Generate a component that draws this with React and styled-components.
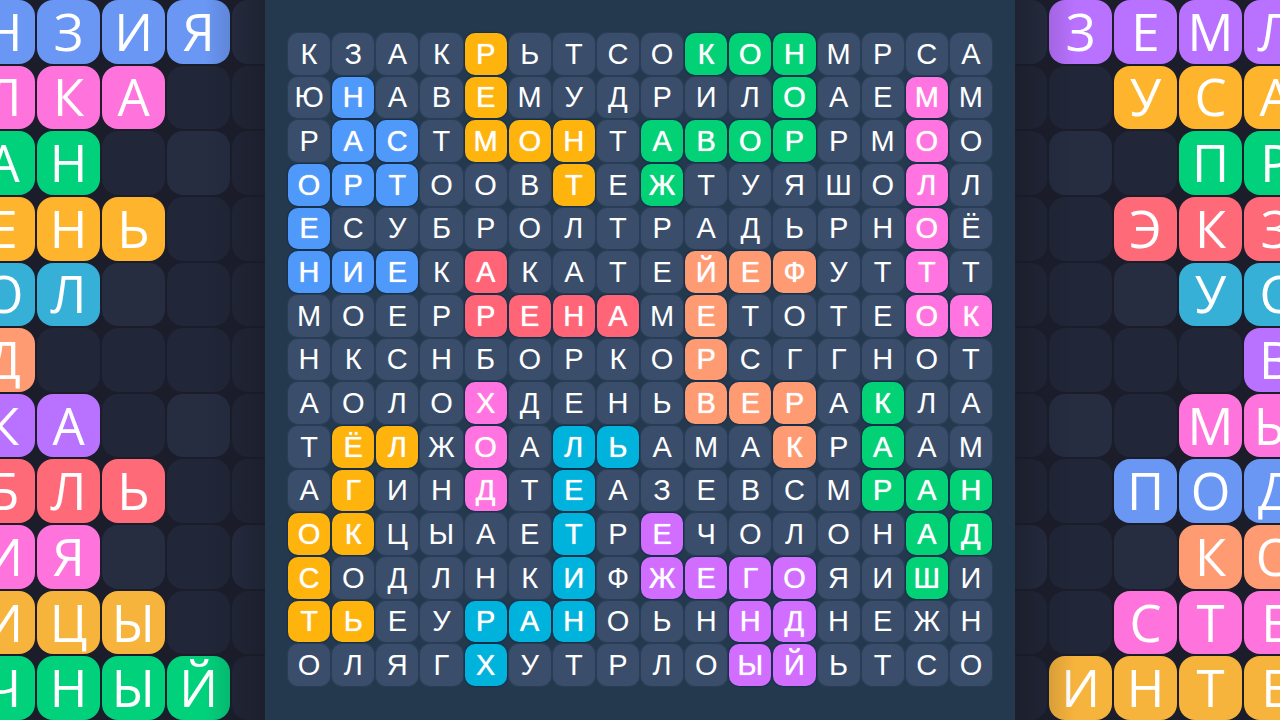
import React from "react";
import styled, { createGlobalStyle } from "styled-components";

const GlobalStyle = createGlobalStyle`
  * { box-sizing: border-box; }
  body { margin: 0; background: #1b1d2b; overflow-x: hidden; }
`;

const boardColors = {
  b: "#4f99fb",
  y: "#ffb30d",
  g: "#02d176",
  p: "#ff74e0",
  r: "#ff6577",
  o: "#ff9b72",
  c: "#00b3dc",
  v: "#d16dff",
  ".": "#3a4e6b",
};

const boardRows = [
  ["КЗАКРЬТСОКОНМРСА", "....y....ggg...."],
  ["ЮНАВЕМУДРИЛОАЕММ", ".b..y......g..p."],
  ["РАСТМОНТАВОРРМОО", ".bb.yyy.gggg..p."],
  ["ОРТООВТЕЖТУЯШОЛЛ", "bbb...y.g.....p."],
  ["ЕСУБРОЛТРАДЬРНОЁ", "b.............p."],
  ["НИЕКАКАТЕЙЕФУТТТ", "bbb.r....ooo..p."],
  ["МОЕРРЕНАМЕТОТЕОК", "....rrrr.o....pp"],
  ["НКСНБОРКОРСГГНОТ", ".........o......"],
  ["АОЛОХДЕНЬВЕРАКЛА", "....p....ooo.g.."],
  ["ТЁЛЖОАЛЬАМАКРААМ", ".yy.p.cc...o.g.."],
  ["АГИНДТЕАЗЕВСМРАН", ".y..p.c......ggg"],
  ["ОКЦЫАЕТРЕЧОЛОНАД", "yy....c.v.....gg"],
  ["СОДЛНКИФЖЕГОЯИШИ", "y.....c.vvvv..g."],
  ["ТЬЕУРАНОЬННДНЕЖН", "yy..ccc...vv...."],
  ["ОЛЯГХУТРЛОЫЙЬТСО", "....c.....vv...."],
];

/* "." is an empty dark cell, "+" an empty lighter one */
const leftRows = [
  ["НЗИЯ+", "#6a97f4"],
  ["ЛКА..", "#ff74dc"],
  ["АН.+.", "#02d17c"],
  ["ЕНЬ..", "#ffb42e"],
  ["ОЛ+..", "#37b0d8"],
  ["Д....", "#ff9b72"],
  ["КА.+.", "#b971ff"],
  ["БЛЬ..", "#ff6a79"],
  ["ИЯ+.+", "#ff74dc"],
  ["ИЦЫ..", "#f7b43c"],
  ["ЧНЫЙ.", "#02d17c"],
];

const rightRows = [
  ["+ЗЕМЛ", "#b971ff"],
  ["..УСА", "#ffb42e"],
  [".+.ПР", "#02d17c"],
  ["..ЭКЗ", "#ff6a79"],
  ["..+УС", "#37b0d8"],
  ["....В", "#b971ff"],
  [".+.МЫ", "#ff74dc"],
  ["..ПОД", "#6a97f4"],
  ["+.+КО", "#ff9b72"],
  ["..СТЕ", "#ff74dc"],
  [".ИНТЕ", "#f7b43c"],
];

const Page = styled.main`
  display: grid;
  grid-template-columns: minmax(0, 1fr) minmax(0, 750px) minmax(0, 1fr);
  min-height: 100vh;
`;

const Side = styled.aside`
  position: relative;
  display: flex;
  justify-content: ${(p) => (p.$side === "left" ? "flex-end" : "flex-start")};
  overflow: hidden;
  background: #1b1d2b;

  &::after {
    content: "";
    position: absolute;
    inset: 0;
    background: linear-gradient(
      to ${(p) => p.$side},
      rgba(22, 24, 34, 0.5),
      rgba(22, 24, 34, 0.15) 32px,
      rgba(22, 24, 34, 0) 60px
    );
  }
`;

const WordGrid = styled.div`
  flex: none;
  display: grid;
  grid-template-columns: repeat(5, 63px);
  grid-auto-rows: minmax(0, 1fr);
  gap: 2px;
  margin: 0 -30px 0 -31px;
`;

const WordCell = styled.div`
  display: flex;
  align-items: center;
  justify-content: center;
  padding-bottom: 2px;
  border-radius: 16px;
  background: ${(p) => p.$color};
  color: #fff;
  font: 400 51px/56px "Open Sans", "Noto Sans", sans-serif;
`;

const Board = styled.section`
  padding: 33px 23px 34px;
  background: #24394e;
`;

const LetterGrid = styled.div`
  display: grid;
  grid-template-columns: repeat(16, minmax(0, 1fr));
  grid-auto-rows: minmax(0, 1fr);
  gap: 2px;
  height: 100%;
`;

const LetterCell = styled.div`
  display: flex;
  align-items: center;
  justify-content: center;
  border-radius: 10px;
  background: ${(p) => boardColors[p.$tone]};
  box-shadow: 0 0 1px 1px ${(p) => (p.$tone === "." ? "#2b4058" : "#17304c")};
  color: #fff;
  font: 400 29px/40px "Liberation Sans", Arial, sans-serif;
  text-shadow: ${(p) => (p.$tone === "." ? "none" : "0 0 1px #fff")};
`;

const emptyColors = { ".": "#212638", "+": "#262d41" };

function WordColumn({ side, rows }) {
  return (
    <Side $side={side}>
      <WordGrid>
        {rows.flatMap(([word, color], r) =>
          [...word].map((ch, c) => (
            <WordCell key={`${r}-${c}`} $color={emptyColors[ch] || color}>
              {emptyColors[ch] ? null : ch}
            </WordCell>
          ))
        )}
      </WordGrid>
    </Side>
  );
}

export default function App() {
  return (
    <>
      <GlobalStyle />
      <Page>
        <WordColumn side="left" rows={leftRows} />
        <Board>
          <LetterGrid>
            {boardRows.flatMap(([letters, tones], r) =>
              [...letters].map((ch, c) => (
                <LetterCell key={`${r}-${c}`} $tone={tones[c]}>
                  {ch}
                </LetterCell>
              ))
            )}
          </LetterGrid>
        </Board>
        <WordColumn side="right" rows={rightRows} />
      </Page>
    </>
  );
}
